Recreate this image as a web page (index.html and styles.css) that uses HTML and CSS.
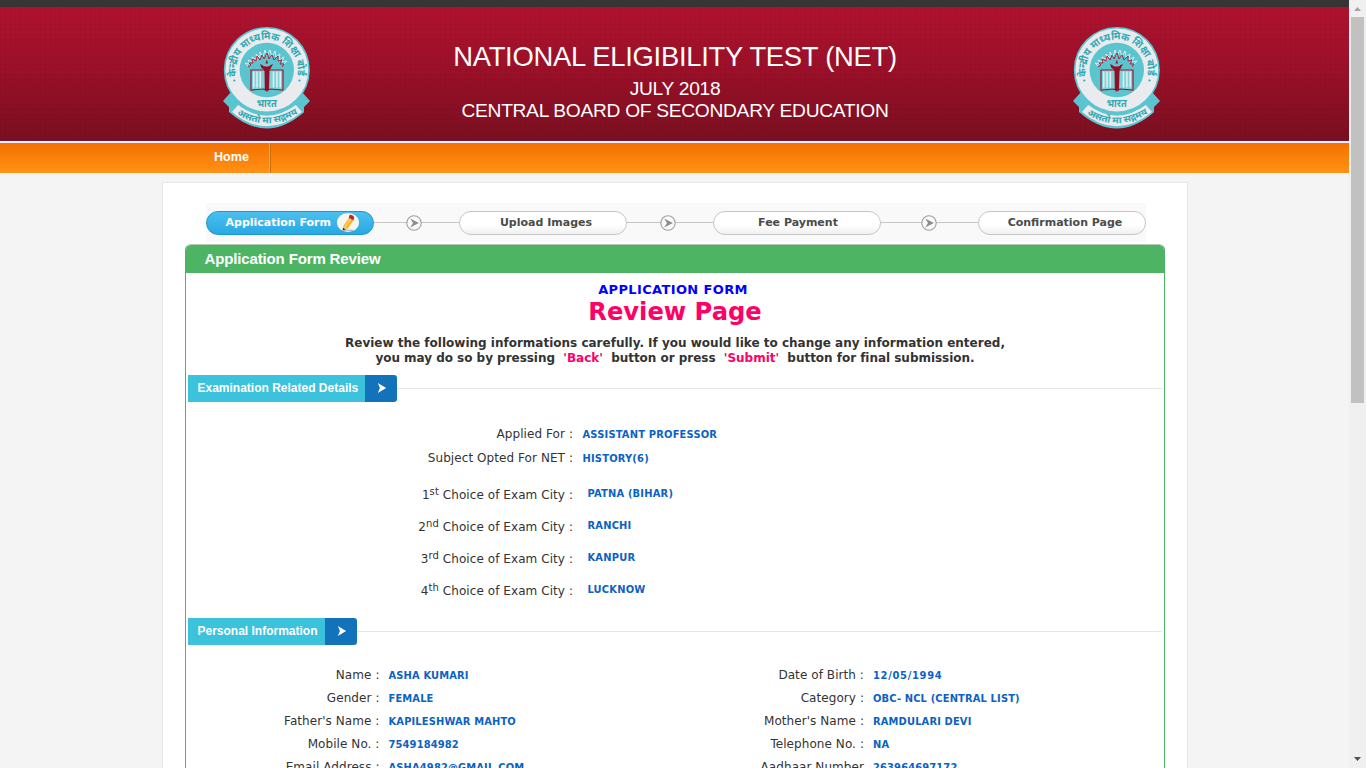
FILE: index.html
```html
<!DOCTYPE html>
<html lang="en">
<head>
<meta charset="utf-8">
<title>National Eligibility Test (NET)</title>
<link rel="stylesheet" href="styles.css">
</head>
<body>
<svg class="defs" width="0" height="0">
  <defs>
    <symbol id="crest" viewBox="0 0 88 103">
      <path d="M8 66 L0 75 L6 81 L6 86 Q44 119 81 86 L81 81 L87 75 L79 66 Z" fill="#5bc5cf"/>
      <circle cx="43.8" cy="44" r="42.2" fill="#e9ebee" stroke="#5bc5cf" stroke-width="1.6"/>
      <path d="M15 78 Q43.5 100 73 78 L80 86 Q43.5 116 8 86 Z" fill="#e9ebee" stroke="#5bc5cf" stroke-width="1.4"/>
      <circle cx="43.8" cy="44" r="27.2" fill="#5bc5cf"/>
      <path id="crest-arc" d="M13.6 51.5 A31 31 0 1 1 74 51.5" fill="none"/>
      <path id="motto-arc" d="M12 87 Q43.5 108 77 86" fill="none"/>
      <text class="crest-text"><textPath href="#crest-arc" startOffset="1" textLength="108" lengthAdjust="spacingAndGlyphs">केन्द्रीय माध्यमिक शिक्षा बोर्ड</textPath></text>
      <text class="crest-text" x="43.8" y="80.5" text-anchor="middle" textLength="20" lengthAdjust="spacingAndGlyphs">भारत</text>
      <text class="crest-text motto"><textPath href="#motto-arc" startOffset="2" textLength="65" lengthAdjust="spacingAndGlyphs">असतो मा सद्गमय</textPath></text>
      <circle cx="11.3" cy="54.5" r="1.1" fill="#2fa9b2"/><circle cx="76.5" cy="54.5" r="1.1" fill="#2fa9b2"/>
      <path d="M25 40l-3-3 5 1-2-4 5 2-1-5 5 3-1-6 4 4 0-6 3 5 2-7 2 6 3-6 2 7 3-6 1 6 4-3-1 6 5-3-2 5 5-1-4 4" fill="none" stroke="#e6eef1" stroke-width=".9"/>
      <path d="M25 41l3-2-2-2 4 0-1-4 4 2 1-5 3 4 2-5 2 4 3-6 2 6 3-4 2 5 4-4 0 5 4-1-2 4 4 0-2 3" fill="none" stroke="#a72441" stroke-width="1"/>
      <path d="M28 44 L41 44 Q43.8 45 46 44 L60 44 L60 64 L47 63 L43.8 65 L41 63 L28 64 Z" fill="#7bd2d9" stroke="#9b1832" stroke-width="1.2"/>
      <path d="M30.8 45.5v16M34 45.5v16M37.3 45.5v16M50.5 45.5v16M53.9 45.5v16M57.2 45.5v16" stroke="#e3eff2" stroke-width="1.5"/>
      <path d="M37 38 Q43 42 50 38 L48 42 Q46 44 46.5 45.5 L46 64 L41.8 64 L41.5 45 Q41 43 38.5 42 Z" fill="#8e1029"/>
      <path d="M42.6 37.5l1.2-4 1.2 4z" fill="#8e1029"/>
      <path d="M40 39.5q4 1.5 7 0" stroke="#ddd" stroke-width=".6" fill="none"/>
    </symbol>
    <symbol id="next" viewBox="0 0 16 16">
      <circle cx="8" cy="8" r="7.2" fill="#fafafa" stroke="#a0a0a0" stroke-width="1.1"/>
      <path d="M4.2 3.6 L12.9 8 L4.2 12.4 L7 8 Z" fill="#8d8d8d"/>
    </symbol>
  </defs>
</svg>
<div class="window">
  <div class="page">
    <div class="topline"></div>
    <header class="banner">
      <svg class="crest"><use href="#crest"/></svg>
      <div class="titles">
        <h1>NATIONAL ELIGIBILITY TEST (NET)</h1>
        <p>JULY 2018</p>
        <p>CENTRAL BOARD OF SECONDARY EDUCATION</p>
      </div>
      <svg class="crest"><use href="#crest"/></svg>
    </header>
    <nav class="menu"><a class="home">Home</a></nav>
    <main class="card">
      <div class="steps">
        <div class="step active"><span>Application Form</span>
          <svg class="pencil" viewBox="0 0 22 19"><ellipse cx="11" cy="9.5" rx="11" ry="9.5" fill="#f8f5ef"/><path d="M6.2 13.2l6.6-9.5 4.3 2.7-6.6 9.5-4.4 1.2z" fill="#f4b52f"/><path d="M8 14l6.6-9.3" stroke="#ffd66a" stroke-width="1.3"/><path d="M11.7 4.7l1-3q3.7-.2 4.6 2.5l-.9 3z" fill="#bd2636"/><path d="M6.2 13.2l-.3 4 4.6-1.4z" fill="#e9cf9b"/><path d="M6 14.8l-.4 2.7 3-.9z" fill="#222"/><path d="M6 17.2h10" stroke="#888" stroke-width=".7"/></svg>
        </div>
        <div class="link l1"><svg><use href="#next"/></svg></div>
        <div class="step"><span>Upload Images</span></div>
        <div class="link l2"><svg><use href="#next"/></svg></div>
        <div class="step fee"><span>Fee Payment</span></div>
        <div class="link l3"><svg><use href="#next"/></svg></div>
        <div class="step"><span>Confirmation Page</span></div>
      </div>
      <section class="panel">
        <h2 class="panel-title">Application Form Review</h2>
        <div class="intro">
          <p class="form-label">APPLICATION FORM</p>
          <p class="review">Review Page</p>
          <p class="note n1">Review the following informations carefully. If you would like to change any information entered,</p>
          <p class="note n2">you may do so by pressing &nbsp;<b>'Back'</b>&nbsp; button or press &nbsp;<b>'Submit'</b>&nbsp; button for final submission.</p>
        </div>
        <div class="section-head"><h3 class="exam-head">Examination Related Details</h3><span class="flag"><svg viewBox="0 0 10 12"><path d="M0 0l10 6-10 6 2.5-6z" fill="#fff"/></svg></span></div>
        <dl class="exam">
          <dt>Applied For :</dt><dd>ASSISTANT PROFESSOR</dd>
          <dt>Subject Opted For NET :</dt><dd>HISTORY(6)</dd>
        </dl>
        <dl class="exam cities">
          <dt>1<sup>st</sup> Choice of Exam City :</dt><dd>PATNA (BIHAR)</dd>
          <dt>2<sup>nd</sup> Choice of Exam City :</dt><dd>RANCHI</dd>
          <dt>3<sup>rd</sup> Choice of Exam City :</dt><dd>KANPUR</dd>
          <dt>4<sup>th</sup> Choice of Exam City :</dt><dd>LUCKNOW</dd>
        </dl>
        <div class="section-head"><h3 class="personal-head">Personal Information</h3><span class="flag"><svg viewBox="0 0 10 12"><path d="M0 0l10 6-10 6 2.5-6z" fill="#fff"/></svg></span></div>
        <dl class="personal">
          <dt>Name :</dt><dd>ASHA KUMARI</dd><dt>Date of Birth :</dt><dd class="date">12/05/1994</dd>
          <dt>Gender :</dt><dd>FEMALE</dd><dt>Category :</dt><dd>OBC- NCL (CENTRAL LIST)</dd>
          <dt>Father's Name :</dt><dd>KAPILESHWAR MAHTO</dd><dt>Mother's Name :</dt><dd>RAMDULARI DEVI</dd>
          <dt>Mobile No. :</dt><dd>7549184982</dd><dt>Telephone No. :</dt><dd>NA</dd>
          <dt>Email Address :</dt><dd>ASHA4982@GMAIL.COM</dd><dt>Aadhaar Number</dt><dd>263964697172</dd>
        </dl>
      </section>
    </main>
  </div>
  <div class="scrollbar">
    <svg width="7" height="4" viewBox="0 0 7 4"><path d="M0 4L3.5 0 7 4z" fill="#a3a3a3"/></svg>
    <div class="thumb"></div>
    <svg class="down" width="7" height="4" viewBox="0 0 7 4"><path d="M0 0h7L3.5 4z" fill="#505050"/></svg>
  </div>
</div>
</body>
</html>
```
FILE: styles.css
```css
* { box-sizing: border-box; }
body, h1, h2, h3, p, dl, dd { margin: 0; }
body { height: 768px; overflow: hidden; background: #f4f4f4; font-family: Verdana, "DejaVu Sans", sans-serif; color: #333; }
.defs { display: block; height: 0; }
.window { display: flex; width: 1366px; height: 768px; overflow: hidden; }
.page { width: 1349px; height: 768px; overflow: hidden; }
.topline { height: 7px; background: #353535; }
.banner {
  height: 134px; display: flex; justify-content: space-between; padding: 19px 188px 0 223px;
  background:
    repeating-linear-gradient(90deg, rgba(60,0,20,.04) 0 1px, transparent 1px 5px),
    repeating-linear-gradient(0deg, rgba(60,0,20,.04) 0 1px, transparent 1px 5px),
    linear-gradient(#b0122e, #9a1028 48%, #7a0f20);
  border-bottom: 1px solid #6b1a3c;
}
.crest { width: 88px; height: 103px; }
.crest-text { font: bold 10.5px "Noto Sans Devanagari", "Noto Sans", "Lohit Devanagari", sans-serif; fill: #2fa9b2; }
.motto { font-size: 9px; }
.titles { padding: 13px 34px 0 0; text-align: center; color: #fff; font-family: "Liberation Sans", Arial, sans-serif; white-space: nowrap; }
.titles h1 { font-size: 27.4px; font-weight: 400; line-height: 35px; margin-bottom: 4px; letter-spacing: -.27px; }
.titles p { font-size: 19.2px; line-height: 22px; letter-spacing: -.29px; }
.menu { height: 32px; border-top: 2px solid #f5eef4; background: linear-gradient(#f57000, #ff9214); padding-left: 194px; display: flex; }
.home { width: 77px; padding-left: 20px; border-right: 1px solid #c96f16; box-shadow: inset -1px 0 #ffa53e; color: #fff; font: bold 12.6px/29px "Liberation Sans", Arial, sans-serif; }
.card { width: 1026px; height: 620px; margin: 9px 0 0 162px; background: #fff; border: 1px solid #e8e8e8; padding: 20px 22px 0; }
.steps { width: 940px; height: 39px; margin-left: 21px; background: #f9f9f9; display: flex; align-items: center; }
.step { width: 168px; height: 24px; border: 1px solid #c6c6c6; border-radius: 12px; background: linear-gradient(#fff 60%, #f0f0f0); color: #4b4b4b; font-size: 11px; font-weight: 700; line-height: 22px; padding-left: 6px; text-align: center; white-space: nowrap; }
.step.fee { padding-left: 2px; }
.step.active { display: flex; align-items: center; gap: 6px; padding-left: 18.5px; border-color: #1a98d0; background: linear-gradient(#4bc0f0, #28a8e2); color: #fff; }
.pencil { width: 22px; height: 19px; }
.link { height: 24px; display: flex; align-items: center; background: linear-gradient(#c6c6c6, #c6c6c6) 0 11px / 100% 1px no-repeat; }
.link svg { width: 16px; height: 16px; }
.l1 { width: 85px; padding-left: 32px; }
.l2 { width: 86px; padding-left: 33px; }
.l3 { width: 97px; padding-left: 40px; }
.panel { width: 980px; height: 560px; margin-top: 2px; border: 1px solid #4db464; border-top: 1px solid #b5c6b8; border-radius: 6px 6px 0 0; overflow: hidden; }
.panel-title { height: 28px; padding-left: 18.5px; background: #4db464; color: #fff; font: bold 15px/27px "Liberation Sans", Arial, sans-serif; letter-spacing: -.14px; }
.intro { height: 102px; padding-top: 9px; text-align: center; white-space: nowrap; }
.form-label { color: #00f; font-size: 13px; font-weight: 700; line-height: 15px; letter-spacing: .3px; padding-right: 4px; }
.form-label { letter-spacing: .36px; }
.review { color: #ff0066; font-size: 24.2px; font-weight: 700; line-height: 30px; margin-bottom: 8px; }
.note { font-size: 12px; font-weight: 700; line-height: 15px; }
.n1 { padding-top: 1px; }
.n2 { letter-spacing: -.03px; }
.note b { color: #ff0066; }
.section-head { height: 27px; margin: 0 2px; display: flex; background: linear-gradient(#e6e6e6, #e6e6e6) 0 13px / 100% 1px no-repeat; }
.section-head h3 { padding-left: 9.5px; background: #3cc2da; color: #fff; font: bold 12px/27px "Liberation Sans", Arial, sans-serif; white-space: nowrap; }
.exam-head { width: 177px; }
.personal-head { width: 137px; }
.flag { width: 32px; background: #1273ba; border-radius: 0 3px 3px 0; padding: 8px 0 0 12px; line-height: 0; }
.flag svg { width: 10px; height: 10px; }
dl { display: grid; white-space: nowrap; }
dt { text-align: right; font-size: 12px; letter-spacing: .07px; }
dd { color: #0b62c4; font: bold 11px "DejaVu Sans Condensed", "DejaVu Sans", sans-serif; line-height: inherit; letter-spacing: .2px; padding-top: 1px; }
.exam { grid-template-columns: 387px 1fr; column-gap: 9.5px; grid-auto-rows: 24px; line-height: 24px; padding-top: 20px; }
.exam:not(.cities) { height: 68px; }
.cities { grid-auto-rows: 32px; column-gap: 14.5px; padding-top: 8px; height: 148px; }
.cities dt { padding-top: 2px; line-height: 30px; }
.cities dd { line-height: 30px; }
sup { font-size: 10px; line-height: 0; vertical-align: 4.5px; }
.personal { grid-template-columns: 193.5px 290px 194.5px 1fr; grid-auto-rows: 23px; line-height: 24px; padding-top: 18px; }
.personal dd { padding-left: 9px; letter-spacing: .15px; }
.personal .date { letter-spacing: .7px; }
.scrollbar { width: 17px; background: #f0f0f0; display: flex; flex-direction: column; align-items: center; padding: 7px 0; }
.thumb { width: 13px; height: 386px; margin-top: 6px; background: #c1c1c1; }
.down { margin-top: auto; }
```
